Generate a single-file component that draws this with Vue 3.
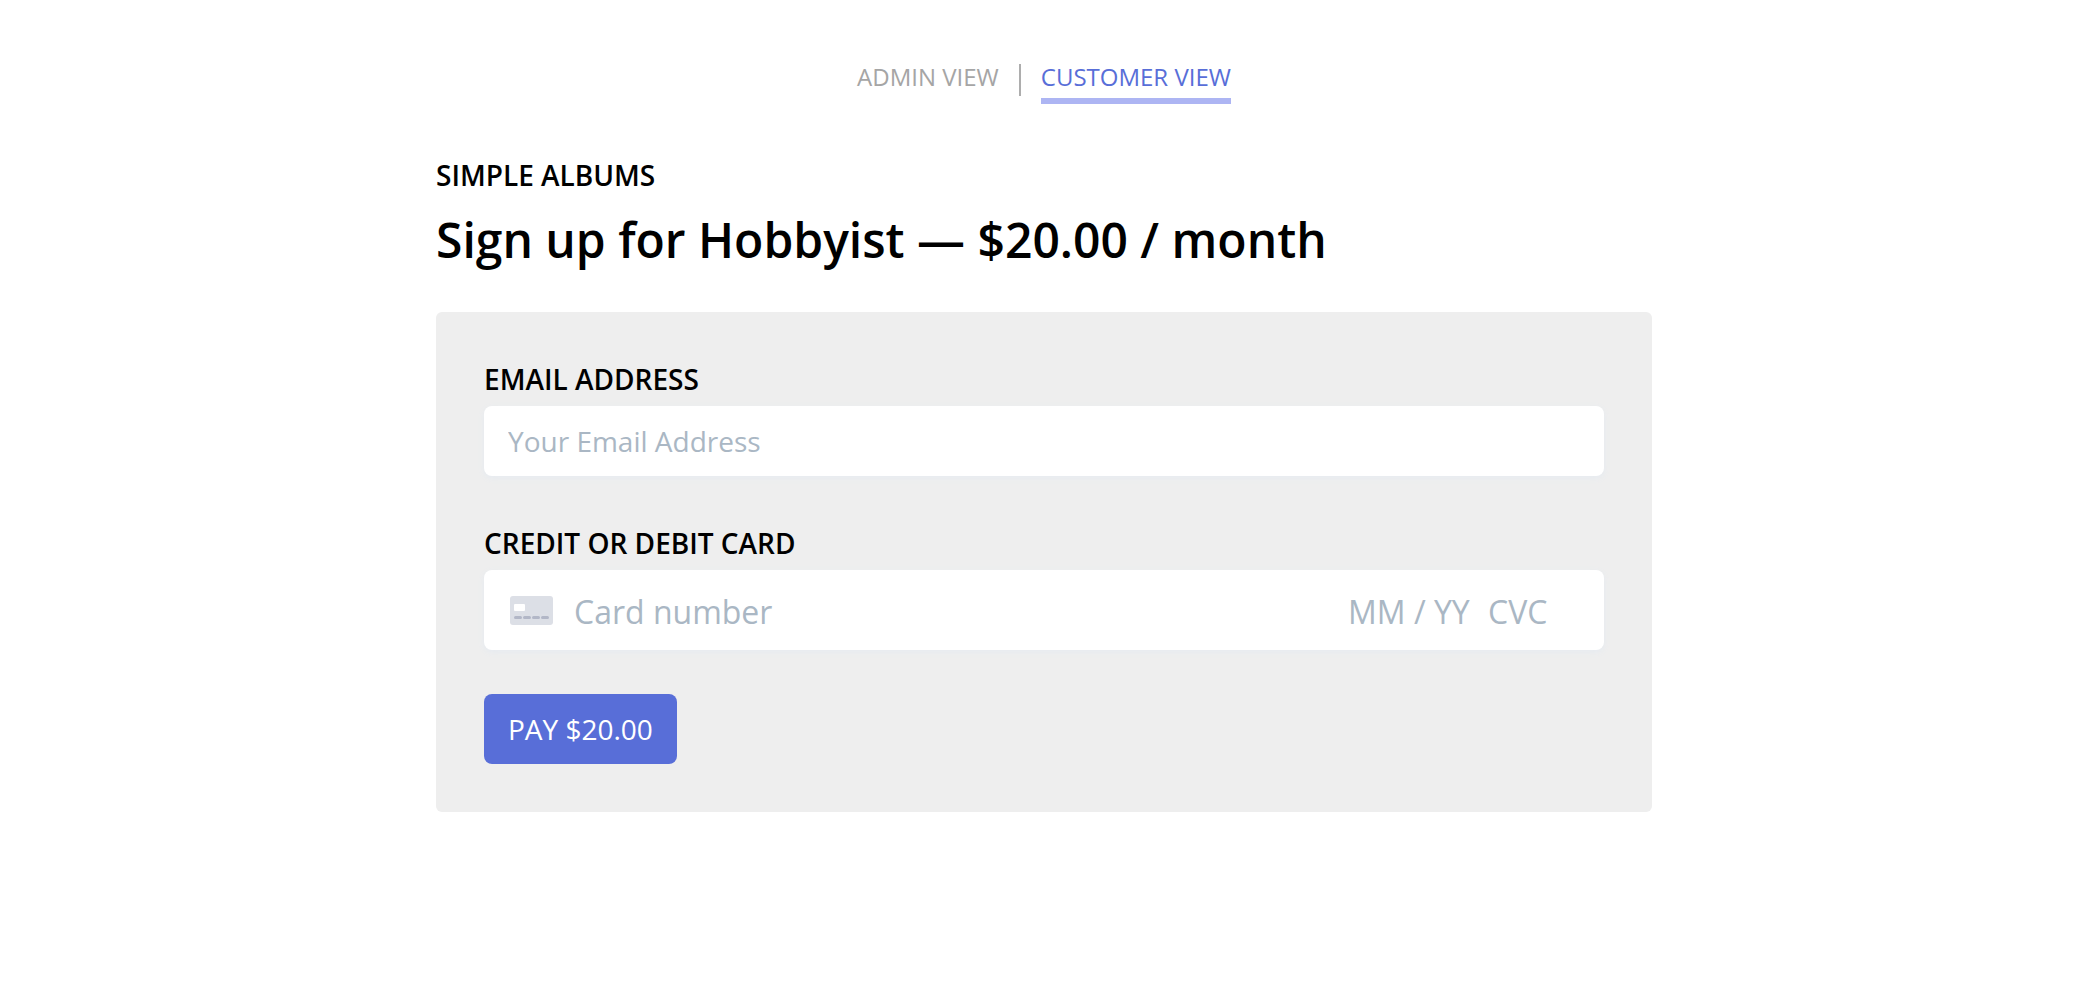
<script setup>
import { ref } from 'vue'

const email = ref('')
const cardNumber = ref('')
const expiry = ref('')
const cvc = ref('')
</script>

<template>
  <div class="page">
    <nav class="views" aria-label="Views">
      <a href="#admin" class="view">ADMIN VIEW</a>
      <span class="divider"></span>
      <a href="#customer" class="view active" aria-current="page">CUSTOMER VIEW</a>
    </nav>

    <main class="content">
      <h2 class="product">SIMPLE ALBUMS</h2>
      <h1 class="title">Sign up for Hobbyist — $20.00 / month</h1>

      <form class="panel" @submit.prevent>
        <label class="label" for="email">EMAIL ADDRESS</label>
        <input id="email" v-model="email" class="field email" type="email" placeholder="Your Email Address" />

        <label class="label" for="card-number">CREDIT OR DEBIT CARD</label>
        <div class="field card">
          <svg class="card-icon" viewBox="0 0 44 30" aria-hidden="true">
            <rect x="0" y="0" width="43" height="29" rx="3" fill="#dcdfe6" />
            <rect x="4" y="8" width="11" height="7" rx="1" fill="#fff" />
            <g fill="#b2b7c7">
              <rect x="4" y="20" width="8" height="3" rx="1.5" />
              <rect x="13" y="20" width="8" height="3" rx="1.5" />
              <rect x="22" y="20" width="8" height="3" rx="1.5" />
              <rect x="31" y="20" width="8" height="3" rx="1.5" />
            </g>
          </svg>
          <input id="card-number" v-model="cardNumber" class="number" type="text" inputmode="numeric" placeholder="Card number" />
          <input v-model="expiry" class="expiry" type="text" inputmode="numeric" aria-label="Expiry date" placeholder="MM / YY" />
          <input v-model="cvc" class="cvc" type="text" inputmode="numeric" aria-label="CVC" placeholder="CVC" />
        </div>

        <button class="pay" type="submit">PAY $20.00</button>
      </form>
    </main>
  </div>
</template>

<style>
body {
  margin: 0;
  background: #fff;
}
</style>

<style scoped>
.page {
  box-sizing: border-box;
  padding: 60px 24px 60px 32px;
  font-family: "Open Sans", "Noto Sans", sans-serif;
  font-size: 28px;
  line-height: 38px;
  color: #000;
}

.views {
  display: flex;
  justify-content: center;
  gap: 20px;
  font-size: 24px;
  line-height: 34px;
}

.view {
  padding-bottom: 4px;
  border-bottom: 6px solid transparent;
  color: #a5a5a5;
  text-decoration: none;
}

.view.active {
  border-bottom-color: #adb5f3;
  color: #586ed8;
}

.divider {
  width: 2px;
  height: 32px;
  margin-top: 4px;
  background: #adadad;
}

.content {
  max-width: 1216px;
  margin: 52px auto 0;
}

.product {
  margin: 0;
  font-size: 28px;
  font-weight: 600;
}

.title {
  margin: 12px 0 38px;
  font-size: 48px;
  font-weight: 600;
  line-height: 68px;
}

.panel {
  display: flex;
  flex-direction: column;
  padding: 48px;
  border-radius: 6px;
  background: #eee;
}

.label {
  margin-bottom: 8px;
  font-weight: 600;
}

.field {
  box-sizing: border-box;
  padding: 16px 24px;
  border: 0;
  border-radius: 8px;
  background: #fff;
  box-shadow: 0 2px 6px #e6ebf1;
}

.email {
  height: 70px;
  margin-bottom: 48px;
  font: inherit;
}

.card {
  display: flex;
  align-items: center;
  height: 80px;
  margin-bottom: 44px;
  padding: 18px 46px 16px 24px;
}

.card-icon {
  flex: none;
  width: 44px;
  height: 30px;
  margin: 0 20px 0 2px;
}

.card input {
  box-sizing: border-box;
  min-width: 0;
  height: 48px;
  padding: 0;
  border: 0;
  background: transparent;
  font: inherit;
  font-size: 32px;
}

.card .number {
  flex: 1;
}

.card .expiry {
  width: 140px;
}

.card .cvc {
  width: 70px;
}

input::placeholder {
  color: #aab7c4;
  opacity: 1;
}

.pay {
  align-self: flex-start;
  padding: 16px 24px;
  border: 0;
  border-radius: 8px;
  background: #586ed8;
  color: #fff;
  font: inherit;
  cursor: pointer;
}
</style>
